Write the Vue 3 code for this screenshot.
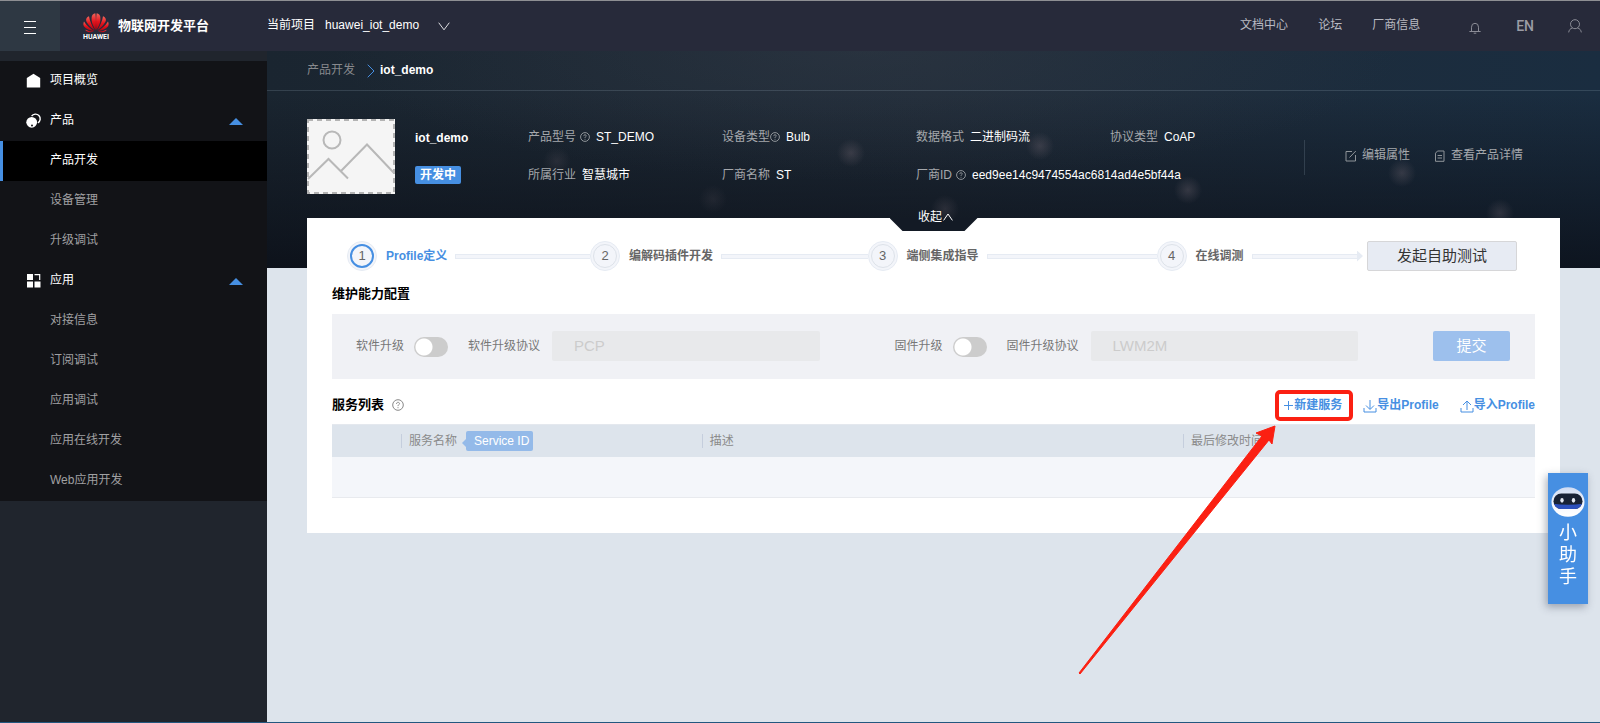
<script setup>
import { ref } from 'vue'

const menu = [
  { label: '项目概览', icon: 'home' },
  { label: '产品', icon: 'product', open: true },
  { label: '产品开发', sub: true, active: true },
  { label: '设备管理', sub: true },
  { label: '升级调试', sub: true },
  { label: '应用', icon: 'apps', open: true },
  { label: '对接信息', sub: true },
  { label: '订阅调试', sub: true },
  { label: '应用调试', sub: true },
  { label: '应用在线开发', sub: true },
  { label: 'Web应用开发', sub: true },
]

const facts = [
  { label: '产品型号', value: 'ST_DEMO', help: true },
  { label: '设备类型', value: 'Bulb', help: true, tight: true },
  { label: '数据格式', value: '二进制码流' },
  { label: '协议类型', value: 'CoAP' },
  { label: '所属行业', value: '智慧城市' },
  { label: '厂商名称', value: 'ST' },
  { label: '厂商ID', value: 'eed9ee14c9474554ac6814ad4e5bf44a', help: true },
]

const steps = ['Profile定义', '编解码插件开发', '端侧集成指导', '在线调测']

const upgrades = ref([
  { id: 'soft', label: '软件升级', protocol: 'PCP', on: false },
  { id: 'firm', label: '固件升级', protocol: 'LWM2M', on: false },
])
</script>

<template>
  <div class="page">
    <header class="topbar">
      <button class="burger" type="button" aria-label="菜单"><i></i><i></i><i></i></button>
      <div class="brand">
        <svg class="logo" viewBox="0 0 26 27" aria-hidden="true">
          <defs>
            <linearGradient id="petal" x1="0" y1="0" x2="0" y2="1">
              <stop offset="0" stop-color="#f4665c" />
              <stop offset="0.5" stop-color="#e3141d" />
              <stop offset="1" stop-color="#b3000e" />
            </linearGradient>
            <g id="half" fill="url(#petal)">
              <path d="M12.6 17C9 11.5 7.9 7 8.9 3C9.5 1.2 11.4 .3 12.3 .2C13.1 4 13.1 12 12.6 17Z" />
              <path d="M11.8 17.4C7 14 2.8 9.5 3.1 6.5C3.3 5 4.5 3.8 6 3.2C6.8 8 9 13 11.8 17.4Z" />
              <path d="M11.3 17.9C6 17.5 1.5 15 .6 12.5C.1 11 .5 9.5 1 8.4C3.5 12.5 7.5 15.8 11.3 17.9Z" />
              <path d="M11.1 18.5C8 19.8 4.5 19.8 2.1 16.8C5 18.2 8 18.5 11.1 18.5Z" />
            </g>
          </defs>
          <use href="#half" />
          <use href="#half" transform="matrix(-1 0 0 1 26 0)" />
          <text x="13" y="26" text-anchor="middle" class="logo-word">HUAWEI</text>
        </svg>
        <strong>物联网开发平台</strong>
      </div>
      <button class="project" type="button">
        <span>当前项目</span>
        <span>huawei_iot_demo</span>
        <svg class="caret" viewBox="0 0 12 9"><path d="M.7.7L6 7.8L11.3.7" /></svg>
      </button>
      <nav class="links">
        <a href="#">文档中心</a>
        <a href="#">论坛</a>
        <a href="#">厂商信息</a>
      </nav>
      <button class="plain bell" type="button" aria-label="通知">
        <svg viewBox="0 0 12 12"><path d="M2.5 9.5V5.2a3.5 3.9 0 0 1 7 0V9.5M.4 9.5H11.6M4.7 11.2H7.3" /></svg>
      </button>
      <button class="plain lang" type="button">EN</button>
      <button class="plain user" type="button" aria-label="账号">
        <svg viewBox="0 0 14 14"><circle cx="7" cy="5.2" r="4.5" /><path d="M4.4 9C2.2 9.6 1 11 .7 13.4M9.6 9c2.2.6 3.4 2 3.7 4.4" /></svg>
      </button>
    </header>

    <div class="body">
      <aside class="side">
        <ul class="menu">
          <li v-for="m in menu" :key="m.label">
            <a href="#" class="item" :class="{ sub: m.sub, active: m.active }">
              <svg v-if="m.icon === 'home'" class="glyph" viewBox="0 0 15 15"><path d="M7.5 .8L14.2 5V14.5H.8V5Z" fill="#fff" /></svg>
              <svg v-else-if="m.icon === 'product'" class="glyph" viewBox="0 0 15 15">
                <path d="M5.6 3.2A4.7 4.7 0 1 1 12 9.8" fill="none" stroke="#fff" stroke-width="1.4" />
                <circle cx="5.7" cy="9.3" r="5.4" fill="#fff" />
                <circle cx="6" cy="12.5" r="1" fill="#121317" />
              </svg>
              <svg v-else-if="m.icon === 'apps'" class="glyph" viewBox="0 0 15 15">
                <path d="M1 1H7V7H1ZM1 8.5H7V14.5H1ZM8.5 8.5H14.5V14.5H8.5Z" fill="#fff" />
                <path d="M8.5 1.7H13.7V7" fill="none" stroke="#fff" stroke-width="1.2" />
              </svg>
              <span>{{ m.label }}</span>
              <i v-if="m.open" class="up"></i>
            </a>
          </li>
        </ul>
      </aside>

      <main class="main">
        <section class="hero">
          <nav class="crumbs">
            <a href="#">产品开发</a>
            <svg viewBox="0 0 8 14"><path d="M.7.7L7 7L.7 13.3" /></svg>
            <strong>iot_demo</strong>
          </nav>
          <div class="summary">
            <svg class="thumb" viewBox="0 0 88 75">
              <rect width="88" height="75" fill="#f5f5f5" />
              <rect x="1" y="1" width="86" height="73" fill="none" stroke="#b3b3b3" stroke-width="2" stroke-dasharray="5 4" />
              <g fill="none" stroke="#b8b8b8" stroke-width="2">
                <circle cx="25" cy="21" r="8.5" />
                <path d="M1 60L21.5 40L41 59.5M34 52L60 25.5L87 54" />
              </g>
            </svg>
            <div class="name">
              <strong>iot_demo</strong>
              <span class="badge">开发中</span>
            </div>
            <dl class="facts">
              <div v-for="f in facts" :key="f.label">
                <dt :class="{ tight: f.tight }">
                  {{ f.label }}<svg v-if="f.help" class="help" viewBox="0 0 12 12"><circle cx="6" cy="6" r="5.3" /><path d="M4.5 4.9C4.5 2.7 7.6 2.9 7.5 4.7C7.4 5.7 6 5.7 6 7.1M6 8.2V9.2" /></svg>
                </dt>
                <dd>{{ f.value }}</dd>
              </div>
            </dl>
            <div class="actions">
              <a href="#">
                <svg viewBox="0 0 12 12"><path d="M7 1.5H1V11H10.5V5M4.5 7.5L10.8 1" /></svg>编辑属性
              </a>
              <a href="#">
                <svg viewBox="0 0 12 12"><path d="M3.5 1H10V11.3H1.5V3.2ZM3.6 5.5H8M3.6 8H8" /></svg>查看产品详情
              </a>
            </div>
          </div>
        </section>

        <section class="panel">
          <button class="fold" type="button">
            <span>收起</span><svg viewBox="0 0 10 8"><path d="M.6 7.4L5 1L9.4 7.4" /></svg>
          </button>

          <div class="steps">
            <ol>
              <li v-for="(s, i) in steps" :key="s" :class="['step', 's' + (i + 1)]">
                <span class="num"><b>{{ i + 1 }}</b></span>
                <span class="title">{{ s }}</span>
                <span class="rail"></span>
              </li>
            </ol>
            <button class="test" type="button">发起自助测试</button>
          </div>

          <h2>维护能力配置</h2>
          <form class="config" @submit.prevent>
            <div v-for="u in upgrades" :key="u.id" class="group">
              <label :for="u.id + '-on'">{{ u.label }}</label>
              <input :id="u.id + '-on'" v-model="u.on" class="switch" type="checkbox" />
              <label :for="u.id + '-protocol'">{{ u.label }}协议</label>
              <input :id="u.id + '-protocol'" class="field" type="text" :value="u.protocol" disabled />
            </div>
            <button class="submit" type="submit">提交</button>
          </form>

          <div class="listhead">
            <h2>服务列表</h2>
            <svg class="help dark" viewBox="0 0 12 12"><circle cx="6" cy="6" r="5.3" /><path d="M4.5 4.9C4.5 2.7 7.6 2.9 7.5 4.7C7.4 5.7 6 5.7 6 7.1M6 8.2V9.2" /></svg>
            <div class="tools">
              <div class="marked">
                <button type="button"><svg class="plus" viewBox="0 0 10 12"><path d="M0 6.5H9M4.5 2V11" /></svg>新建服务</button>
                <svg class="arrow" viewBox="0 0 196 248" aria-hidden="true"><path d="M0 247L183 10L177 7L196 0L193 18L190 14L1 248Z" /></svg>
              </div>
              <button type="button"><svg class="io" viewBox="0 0 14 13"><path d="M1 8V12H13V8M7 0V9M3 5.5L7 9.5L11 5.5" /></svg>导出Profile</button>
              <button type="button"><svg class="io" viewBox="0 0 14 13"><path d="M1 8V12H13V8M7 10V1.5M3 5L7 1L11 5" /></svg>导入Profile</button>
            </div>
          </div>

          <table>
            <colgroup><col class="c1" /><col class="c2" /><col class="c3" /><col class="c4" /></colgroup>
            <thead>
              <tr>
                <td></td>
                <th><div>服务名称<span class="tip">Service ID</span></div></th>
                <th><div>描述</div></th>
                <th><div>最后修改时间</div></th>
              </tr>
            </thead>
            <tbody><tr><td colspan="4"></td></tr></tbody>
          </table>
        </section>
      </main>
    </div>

    <button class="assistant" type="button">
      <svg viewBox="0 0 34 30" aria-hidden="true">
        <defs>
          <linearGradient id="face" x1="0" y1="0" x2="0" y2="1">
            <stop offset="0" stop-color="#cfdcf3" /><stop offset="0.6" stop-color="#f4f7fd" /><stop offset="1" stop-color="#fff" />
          </linearGradient>
          <clipPath id="visor"><rect x="2.5" y="6.5" width="29" height="15.5" rx="7.7" /></clipPath>
        </defs>
        <ellipse cx="17" cy="15" rx="16.5" ry="14.7" fill="url(#face)" />
        <g clip-path="url(#visor)">
          <rect width="34" height="30" fill="#182235" />
          <path d="M0 16.5Q17 19 34 16.5V30H0Z" fill="#2c50bd" />
        </g>
        <ellipse cx="11" cy="13.3" rx="1.7" ry="2.4" fill="#e3e8f2" />
        <ellipse cx="22.5" cy="13.3" rx="1.7" ry="2.4" fill="#e3e8f2" />
      </svg>
      <span>小助手</span>
    </button>
  </div>
</template>

<style>
body {
  margin: 0;
}
</style>

<style scoped>
* {
  box-sizing: border-box;
}
.page {
  position: relative;
  display: flex;
  flex-direction: column;
  min-height: 100vh;
  border-top: 1px solid #8e8f93;
  border-bottom: 1px solid #23577f;
  background: #dde4ec;
  font: 12px/18px "Liberation Sans", "Noto Sans CJK SC", sans-serif;
  color: #333;
}
a {
  color: inherit;
  text-decoration: none;
}
button {
  padding: 0;
  border: 0;
  background: none;
  font: inherit;
  color: inherit;
}
svg {
  display: block;
  flex: none;
  fill: none;
  overflow: visible;
}

/* top bar */
.topbar {
  display: flex;
  align-items: center;
  height: 50px;
  padding-right: 18px;
  background: #272a3a;
  color: #fff;
}
.burger {
  display: flex;
  flex-direction: column;
  align-items: center;
  justify-content: center;
  gap: 5px;
  width: 60px;
  height: 50px;
  padding-top: 3px;
  background: #2e3843;
}
.burger i {
  width: 12px;
  height: 1px;
  background: #fff;
}
.brand {
  display: flex;
  align-items: center;
  gap: 9px;
  width: 207px;
  padding-left: 23px;
}
.brand strong {
  font-size: 13px;
}
.logo {
  width: 26px;
  height: 27px;
}
.logo-word {
  fill: #fff;
  font: bold 7px Roboto, "Liberation Sans", sans-serif;
}
.project {
  display: flex;
  align-items: center;
  gap: 10px;
  padding-bottom: 2px;
}
.caret {
  width: 12px;
  height: 9px;
  margin: 2px 0 0 9px;
  stroke: #e0e0e4;
}
.links {
  display: flex;
  gap: 30px;
  margin-left: auto;
  padding-bottom: 2px;
  color: #b9bac2;
}
.plain {
  color: #9b9ca5;
  stroke: #8b8c96;
}
.bell {
  margin: 4px 0 0 49px;
}
.bell svg {
  width: 12px;
  height: 12px;
}
.lang {
  margin: 0 34px 0 35px;
  font: 500 14px/18px Roboto, "Liberation Sans", sans-serif;
  stroke: none;
}
.user svg {
  width: 14px;
  height: 14px;
}

/* side menu */
.body {
  display: flex;
  flex: 1;
}
.side {
  flex: none;
  width: 267px;
  padding-top: 10px;
  background: #20252d;
}
.menu {
  margin: 0;
  padding: 0;
  list-style: none;
  background: #121317;
}
.item {
  display: flex;
  align-items: center;
  height: 40px;
  padding: 0 24px 2px 26px;
  color: #fff;
}
.item.sub {
  padding-left: 50px;
  color: #a0a0a2;
}
.item.active {
  padding-left: 47px;
  border-left: 3px solid #468fe2;
  background: #000;
  color: #fff;
}
.glyph {
  width: 15px;
  height: 15px;
  margin-right: 9px;
}
.up {
  margin: 3px 0 0 auto;
  border: solid transparent;
  border-width: 0 7px 7px;
  border-bottom-color: #468fe2;
}

/* hero */
.main {
  flex: 1;
  min-width: 0;
}
.hero {
  height: 217px;
  background:
    radial-gradient(circle at 584px 102px, rgba(110, 100, 110, 0.36), transparent 14px),
    radial-gradient(circle at 773px 95px, rgba(110, 100, 110, 0.36), transparent 14px),
    radial-gradient(circle at 921px 139px, rgba(110, 100, 110, 0.36), transparent 14px),
    radial-gradient(circle at 1135px 122px, rgba(110, 100, 110, 0.36), transparent 14px),
    radial-gradient(circle at 678px 158px, rgba(110, 100, 110, 0.25), transparent 14px),
    radial-gradient(circle at 1233px 162px, rgba(110, 100, 110, 0.3), transparent 14px),
    radial-gradient(circle at 290px 110px, rgba(110, 100, 110, 0.2), transparent 14px),
    radial-gradient(circle at 446px 148px, rgba(110, 100, 110, 0.15), transparent 14px),
    radial-gradient(ellipse 40% 60% at 45% 0, rgba(55, 62, 74, 0.4), transparent),
    linear-gradient(to bottom, transparent 20%, rgba(9, 12, 20, 0.75)),
    linear-gradient(to right, #1a2530, #1f2b38 50%, #1a2d40);
}
.crumbs {
  display: flex;
  align-items: center;
  height: 40px;
  padding: 0 40px 2px;
  border-bottom: 1px solid rgba(160, 180, 195, 0.2);
  color: #87898d;
}
.crumbs svg {
  width: 8px;
  height: 14px;
  margin: 2px 5px 0 12px;
  stroke: #468fe2;
}
.crumbs strong {
  color: #fff;
}
.summary {
  display: flex;
  padding: 28px 40px 0;
}
.thumb {
  width: 88px;
  height: 75px;
}
.name {
  display: flex;
  flex-direction: column;
  align-items: flex-start;
  gap: 19px;
  width: 133px;
  padding: 10px 0 0 20px;
  color: #fff;
}
.badge {
  padding: 0 5px;
  border-radius: 2px;
  background: #468fe2;
  font-weight: bold;
}
.facts {
  display: grid;
  flex: 1;
  grid-template-columns: repeat(4, minmax(0, 1fr));
  grid-auto-rows: 18px;
  row-gap: 20px;
  margin: 0;
  padding-top: 9px;
  white-space: nowrap;
}
.facts > div {
  display: flex;
  gap: 6px;
}
dt {
  display: flex;
  align-items: center;
  gap: 4px;
  color: #a5a8ac;
}
dt.tight {
  gap: 0;
}
dd {
  margin: 0;
  color: #fff;
}
.help {
  width: 10px;
  height: 10px;
  stroke: #a5a8ac;
}
.help.dark {
  width: 12px;
  height: 12px;
  margin: 0 0 0 8px;
  stroke: #888;
}
.actions {
  display: flex;
  flex: none;
  align-items: center;
  gap: 24px;
  width: 256px;
  height: 35px;
  margin-top: 21px;
  padding: 0 0 6px 40px;
  border-left: 1px solid rgba(160, 180, 195, 0.2);
  color: #a5a8ac;
  white-space: nowrap;
}
.actions a {
  display: flex;
  flex: none;
  align-items: center;
}
.actions svg {
  width: 12px;
  height: 12px;
  margin: 3px 5px 0 0;
  stroke: #8f9499;
}

/* panel */
.panel {
  position: relative;
  min-height: 315px;
  margin: -50px 40px 40px;
  padding: 23px 25px 35px;
  background: #fff;
}
.fold {
  position: absolute;
  top: -13px;
  left: 50%;
  display: flex;
  align-items: center;
  justify-content: center;
  gap: 1px;
  width: 88px;
  height: 26px;
  margin-left: -44px;
  padding: 0 0 2px 4px;
  color: #fff;
}
.fold::before {
  content: "";
  position: absolute;
  inset: 13px 0 0;
  background: #131a25;
  clip-path: polygon(0 0, 100% 0, 75px 100%, 13px 100%);
}
.fold span,
.fold svg {
  position: relative;
}
.fold svg {
  width: 10px;
  height: 8px;
  stroke: #fff;
}
.steps {
  display: flex;
  align-items: center;
  gap: 4px;
  padding: 0 18px 0 15px;
}
.steps ol {
  display: flex;
  flex: 1;
  margin: 0;
  padding: 0;
  list-style: none;
}
.step {
  display: flex;
  flex: 137 0 auto;
  align-items: center;
  white-space: nowrap;
}
.s2 {
  flex-grow: 149;
}
.s3 {
  flex-grow: 173;
}
.s4 {
  flex-grow: 107;
}
.num {
  display: flex;
  width: 30px;
  height: 30px;
  padding: 2px;
  border: 1px solid #e6ebf3;
  border-radius: 50%;
  background: #f3f5fa;
}
.num b {
  flex: 1;
  border: 1px solid #dde2e9;
  border-radius: 50%;
  font-size: 13px;
  font-weight: normal;
  line-height: 22px;
  text-align: center;
  color: #666;
}
.s1 .num b {
  border: 2px solid #468fe2;
  line-height: 20px;
}
.title {
  padding: 0 8px 0 9px;
  font-weight: bold;
  color: #666;
}
.s1 .title {
  color: #468fe2;
}
.rail {
  position: relative;
  flex: 1;
  height: 5px;
  border: 1px solid #e6ebf3;
  border-right: 0;
  background: #f3f5fa;
}
.s4 .rail {
  margin-right: 6px;
}
.s4 .rail::after {
  content: "";
  position: absolute;
  top: -4px;
  left: 100%;
  width: 6px;
  height: 11px;
  background: #e6ebf3;
  clip-path: polygon(0 0, 100% 50%, 0 100%);
}
.test {
  width: 150px;
  height: 30px;
  border: 1px solid #d6d6d8;
  border-radius: 2px;
  background: #e7ebf3;
  font-size: 15px;
}
h2 {
  margin: 0;
  font-size: 13px;
  line-height: 20px;
  color: #000;
}
.steps + h2 {
  margin-top: 13px;
}
.config {
  display: flex;
  align-items: center;
  gap: 75px;
  height: 65px;
  margin-top: 10px;
  padding: 0 25px 2px 24px;
  background: #f0f1f5;
}
.group {
  display: flex;
  flex: 1;
  align-items: center;
  min-width: 0;
  color: #777;
  white-space: nowrap;
}
.switch {
  flex: none;
  width: 34px;
  height: 20px;
  margin: 2px 20px 0 10px;
  border-radius: 10px;
  background: radial-gradient(circle at 10px 10px, #fff 8px, transparent 9px) #ccc;
  appearance: none;
}
.switch:checked {
  background: radial-gradient(circle at 24px 10px, #fff 8px, transparent 9px) #468fe2;
}
.field {
  flex: 1;
  min-width: 0;
  height: 30px;
  margin-left: 12px;
  padding: 0 22px;
  border: 0;
  border-radius: 2px;
  background: #e8e9eb;
  font: 15px "Liberation Sans", sans-serif;
  color: #ccc;
}
.submit {
  width: 77px;
  height: 30px;
  border-radius: 2px;
  background: #9dc0ed;
  font-size: 15px;
  color: #fff;
}
.listhead {
  display: flex;
  align-items: center;
  height: 20px;
  margin: 16px 0 9px;
}
.tools {
  display: flex;
  gap: 21px;
  margin-left: auto;
  font-weight: bold;
  color: #468fe2;
}
.tools button {
  display: flex;
  align-items: center;
}
.tools svg {
  stroke: #468fe2;
}
.plus {
  width: 10px;
  height: 12px;
}
.io {
  width: 14px;
  height: 13px;
  margin-top: 2px;
}
.marked {
  position: relative;
}
.marked::after {
  content: "";
  position: absolute;
  inset: -6px -11px -7px -9px;
  border: 4px solid #fb2012;
  border-radius: 5px;
  pointer-events: none;
}
.tools .arrow {
  position: absolute;
  top: 30px;
  right: 100%;
  z-index: 2;
  width: 196px;
  height: 248px;
  margin-right: 9px;
  fill: #fb2012;
  stroke: #fb2012;
  pointer-events: none;
}
table {
  width: 100%;
  border-collapse: collapse;
  table-layout: fixed;
  border-top: 1px solid #e4e8ee;
  border-bottom: 1px solid #e8eaee;
}
.c1 {
  width: 69px;
}
.c2 {
  width: 25%;
}
.c3 {
  width: 40%;
}
th,
td {
  padding: 0;
}
thead {
  height: 32px;
  background: #dde4ec;
}
tbody {
  height: 41px;
  background: #f4f6fa;
}
th {
  font-weight: normal;
  text-align: left;
  color: #8a8a8a;
}
th div {
  display: flex;
  align-items: center;
  height: 14px;
  padding-left: 7px;
  border-left: 1px solid #c5cedd;
}
.tip {
  position: relative;
  margin-left: 9px;
  padding: 1px 4px 1px 8px;
  border-radius: 2px;
  background: #94bae9;
  color: #fff;
}
.tip::before {
  content: "";
  position: absolute;
  top: 8px;
  right: 100%;
  border: solid transparent;
  border-width: 4px 4px 4px 0;
  border-right-color: #94bae9;
}

/* floating helper */
.assistant {
  position: fixed;
  top: 473px;
  right: 12px;
  display: flex;
  flex-direction: column;
  align-items: center;
  gap: 5px;
  width: 40px;
  height: 131px;
  padding-top: 14px;
  background: #468fe2;
  box-shadow: -2px 3px 8px rgba(70, 80, 100, 0.45);
  font-size: 18px;
  line-height: 22px;
  color: #fff;
}
.assistant svg {
  width: 34px;
  height: 30px;
}
.assistant span {
  width: 18px;
}
</style>
